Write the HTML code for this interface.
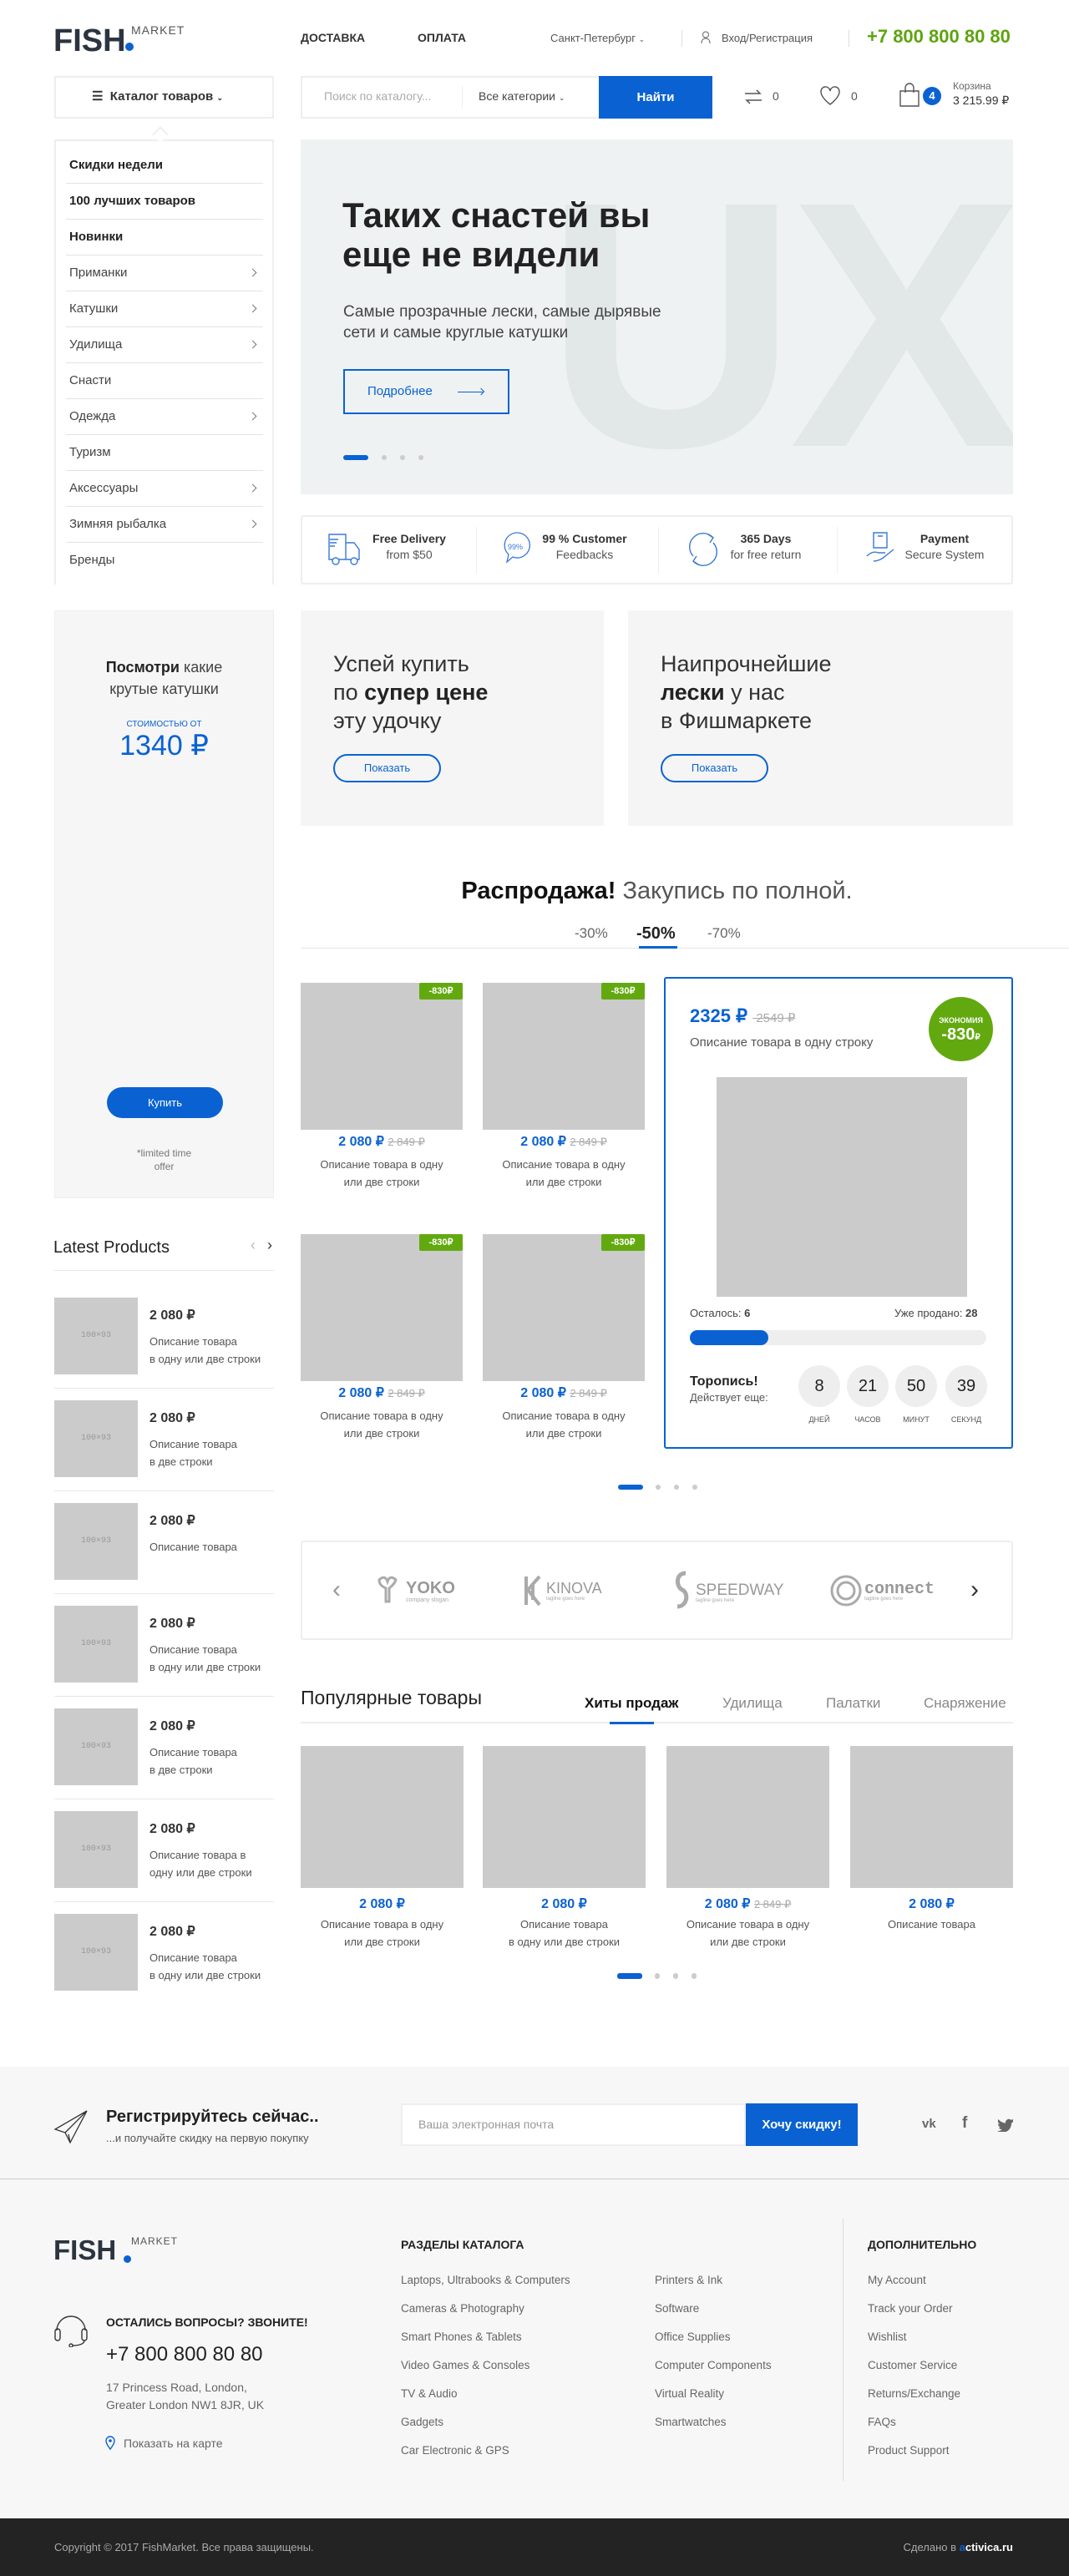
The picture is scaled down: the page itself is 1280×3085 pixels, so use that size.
<!DOCTYPE html>
<html><head><meta charset="utf-8">
<style>
*{margin:0;padding:0;box-sizing:border-box}
body{width:1280px;height:3085px;position:relative;background:#fff;font-family:"Liberation Sans","Noto Sans CJK SC",sans-serif;color:#333;overflow:hidden}
.a{position:absolute;white-space:nowrap;line-height:1.2}
.blue{color:#0a62d2}
.gray{background:#cbcbcb}
.c{text-align:center}
</style></head><body>

<!-- HEADER -->
<div class="a" style="left:64px;top:27px;font-size:38px;font-weight:bold;color:#2c3440;letter-spacing:0">FISH</div>
<div class="a" style="left:150px;top:51px;width:10px;height:10px;border-radius:50%;background:#0a62d2"></div>
<div class="a" style="left:157px;top:28px;font-size:14px;color:#555;letter-spacing:1px">MARKET</div>
<div class="a" style="left:360px;top:37px;font-size:14px;font-weight:bold;color:#333">ДОСТАВКА</div>
<div class="a" style="left:500px;top:37px;font-size:14px;font-weight:bold;color:#333">ОПЛАТА</div>
<div class="a" style="left:659px;top:38px;font-size:13px;color:#555">Санкт-Петербург <span style="font-size:9px">⌄</span></div>
<div class="a" style="left:816px;top:36px;width:1px;height:20px;background:#ddd"></div>
<svg class="a" style="left:839px;top:37px" width="12" height="16" viewBox="0 0 12 16"><circle cx="6" cy="4.5" r="3.5" fill="none" stroke="#666"/><path d="M1 15c0-4 2-6 5-6s5 2 5 6" fill="none" stroke="#666"/></svg>
<div class="a" style="left:864px;top:38px;font-size:13px;color:#555">Вход/Регистрация</div>
<div class="a" style="left:1016px;top:36px;width:1px;height:20px;background:#ddd"></div>
<div class="a" style="left:1038px;top:31px;font-size:22px;font-weight:bold;color:#5ea310">+7 800 800 80 80</div>

<div class="a" style="left:65px;top:91px;width:263px;height:51px;border:2px solid #eee;background:#fff"></div>
<div class="a" style="left:110px;top:107px;font-size:15px;font-weight:bold;color:#333">☰&nbsp; Каталог товаров <span style="font-size:9px">⌄</span></div>
<div class="a" style="left:360px;top:91px;width:493px;height:51px;border:2px solid #eee"></div>
<div class="a" style="left:388px;top:107px;font-size:14px;color:#aaa">Поиск по каталогу...</div>
<div class="a" style="left:553px;top:102px;width:1px;height:28px;background:#eee"></div>
<div class="a" style="left:573px;top:107px;font-size:14px;color:#444">Все категории <span style="font-size:9px">⌄</span></div>
<div class="a c" style="left:717px;top:91px;width:136px;height:51px;background:#0a62d2;color:#fff;font-size:15px;font-weight:bold;line-height:51px">Найти</div>
<svg class="a" style="left:889px;top:104px" width="26" height="24" viewBox="0 0 26 24"><path d="M3 8h18l-4-4M23 16H5l4 4" fill="none" stroke="#555" stroke-width="1.5"/></svg>
<div class="a" style="left:925px;top:107px;font-size:14px;color:#555">0</div>
<svg class="a" style="left:981px;top:102px" width="26" height="26" viewBox="0 0 26 26"><path d="M13 23S2 15 2 8a5.5 5.5 0 0 1 11-1 5.5 5.5 0 0 1 11 1c0 7-11 15-11 15z" fill="none" stroke="#555" stroke-width="1.4"/></svg>
<div class="a" style="left:1019px;top:107px;font-size:14px;color:#555">0</div>
<svg class="a" style="left:1076px;top:99px" width="26" height="30" viewBox="0 0 26 30"><path d="M2 10h22v18H2z M8 12V6a5 5 0 0 1 10 0v6" fill="none" stroke="#555" stroke-width="1.4"/></svg>
<div class="a c" style="left:1105px;top:104px;width:22px;height:22px;border-radius:50%;background:#0a62d2;color:#fff;font-size:13px;font-weight:bold;line-height:22px">4</div>
<div class="a" style="left:1141px;top:96px;font-size:12px;color:#666">Корзина</div>
<div class="a" style="left:1141px;top:112px;font-size:14px;color:#333">3 215.99 ₽</div>

<!-- SIDEBAR MENU -->
<div class="a" style="left:65px;top:167px;width:263px;height:533px;border:2px solid #eee;border-bottom:none"></div>
<div class="a" style="left:185px;top:154px;width:14px;height:14px;background:#fff;border-left:2px solid #eee;border-top:2px solid #eee;transform:rotate(45deg)"></div>
<div id="menu"></div>

<!-- HERO -->
<div class="a" style="left:360px;top:167px;width:853px;height:425px;background:#eef2f2;overflow:hidden">
 <div class="a" style="left:292px;top:13px;font-size:420px;font-weight:bold;color:#e2e7e7;letter-spacing:-10px;line-height:1">UX</div>
</div>
<div class="a" style="left:410px;top:234px;font-size:42px;font-weight:bold;color:#222;line-height:47px">Таких снастей вы<br>еще не видели</div>
<div class="a" style="left:411px;top:361px;font-size:19px;color:#444;line-height:25px">Самые прозрачные лески, самые дырявые<br>сети и самые круглые катушки</div>
<div class="a" style="left:411px;top:442px;width:199px;height:54px;border:2px solid #0a62d2"></div>
<div class="a blue" style="left:440px;top:460px;font-size:15px">Подробнее</div>
<div class="a" style="left:548px;top:469px;width:30px;height:1px;background:#0a62d2"></div>
<div class="a" style="left:573px;top:466px;width:6px;height:6px;border-top:1px solid #0a62d2;border-right:1px solid #0a62d2;transform:rotate(45deg)"></div>
<div class="a" style="left:411px;top:545px;width:30px;height:6px;border-radius:3px;background:#0a62d2"></div>
<div class="a" style="left:457px;top:545px;width:6px;height:6px;border-radius:3px;background:#ccc"></div>
<div class="a" style="left:479px;top:545px;width:6px;height:6px;border-radius:3px;background:#ccc"></div>
<div class="a" style="left:501px;top:545px;width:6px;height:6px;border-radius:3px;background:#ccc"></div>

<!-- FEATURES -->
<div class="a" style="left:360px;top:617px;width:853px;height:83px;border:2px solid #eee;border-radius:3px"></div>
<svg class="a" style="left:392px;top:638px" width="42" height="42" viewBox="0 0 42 42" fill="none" stroke="#3a78d6" stroke-width="1.4"><path d="M2 2h20v30H2zM22 12h10l6 8v12H22"/><circle cx="10" cy="34" r="4" fill="#fff"/><circle cx="32" cy="34" r="4" fill="#fff"/><path d="M3 8h10M3 12h8M3 16h6"/></svg>
<div class="a c" style="left:440px;top:637px;width:100px;font-size:14px;font-weight:bold;color:#333">Free Delivery</div>
<div class="a c" style="left:440px;top:656px;width:100px;font-size:14px;color:#555">from $50</div>
<div class="a" style="left:570px;top:631px;width:1px;height:56px;background:#eee"></div>
<svg class="a" style="left:603px;top:636px" width="34" height="42" viewBox="0 0 34 42" fill="none" stroke="#3a78d6" stroke-width="1.3"><path d="M17 2a15 15 0 1 1-6 29l-7 6 2-9A15 15 0 0 1 17 2z"/><text x="5" y="22" font-size="9" fill="#3a78d6" stroke="none" font-family="Liberation Sans">99%</text></svg>
<div class="a c" style="left:640px;top:637px;width:120px;font-size:14px;font-weight:bold;color:#333">99 % Customer</div>
<div class="a c" style="left:640px;top:656px;width:120px;font-size:14px;color:#555">Feedbacks</div>
<div class="a" style="left:788px;top:631px;width:1px;height:56px;background:#eee"></div>
<svg class="a" style="left:824px;top:636px" width="36" height="44" viewBox="0 0 36 44" fill="none" stroke="#3a78d6" stroke-width="1.4"><path d="M6 30A15 15 0 0 1 30 8M30 14A15 15 0 0 1 6 36"/><path d="M24 4l6 4-4 6M12 40l-6-4 4-6"/></svg>
<div class="a c" style="left:867px;top:637px;width:100px;font-size:14px;font-weight:bold;color:#333">365 Days</div>
<div class="a c" style="left:867px;top:656px;width:100px;font-size:14px;color:#555">for free return</div>
<div class="a" style="left:1002px;top:631px;width:1px;height:56px;background:#eee"></div>
<svg class="a" style="left:1036px;top:636px" width="40" height="40" viewBox="0 0 40 40" fill="none" stroke="#3a78d6" stroke-width="1.4"><path d="M10 2h16v18H10zM15 6h6"/><path d="M2 30c4-4 8-6 14-4h8M10 36c4 0 10-2 14-6l10-8"/></svg>
<div class="a c" style="left:1076px;top:637px;width:110px;font-size:14px;font-weight:bold;color:#333">Payment</div>
<div class="a c" style="left:1076px;top:656px;width:110px;font-size:14px;color:#555">Secure System</div>

<!-- LEFT PROMO -->
<div class="a" style="left:65px;top:731px;width:263px;height:704px;background:#f6f6f6;border:1px solid #eee"></div>
<div class="a c" style="left:65px;top:786px;width:263px;font-size:18px;color:#444;line-height:26px"><b style="color:#222">Посмотри</b> какие<br>крутые катушки</div>
<div class="a c blue" style="left:65px;top:862px;width:263px;font-size:10px">СТОИМОСТЬЮ ОТ</div>
<div class="a c blue" style="left:65px;top:873px;width:263px;font-size:34px">1340 ₽</div>
<div class="a c" style="left:128px;top:1302px;width:139px;height:37px;border-radius:19px;background:#0a62d2;color:#fff;font-size:13px;line-height:37px">Купить</div>
<div class="a c" style="left:65px;top:1373px;width:263px;font-size:12px;color:#777;line-height:16px">*limited time<br>offer</div>

<!-- PROMO CARDS -->
<div class="a" style="left:360px;top:731px;width:363px;height:258px;background:#f5f5f5"></div>
<div class="a" style="left:399px;top:778px;font-size:27px;color:#333;line-height:34px">Успей купить<br>по <b style="color:#222">супер цене</b><br>эту удочку</div>
<div class="a c blue" style="left:399px;top:903px;width:129px;height:34px;border:2px solid #0a62d2;border-radius:17px;font-size:13px;line-height:30px">Показать</div>
<div class="a" style="left:752px;top:731px;width:461px;height:258px;background:#f5f5f5"></div>
<div class="a" style="left:791px;top:778px;font-size:27px;color:#333;line-height:34px">Наипрочнейшие<br><b style="color:#222">лески</b> у нас<br>в Фишмаркете</div>
<div class="a c blue" style="left:791px;top:903px;width:129px;height:34px;border:2px solid #0a62d2;border-radius:17px;font-size:13px;line-height:30px">Показать</div>

<!-- SALE -->
<div class="a c" style="left:360px;top:1050px;width:853px;font-size:29px;color:#555"><b style="color:#111">Распродажа!</b> Закупись по полной.</div>
<div class="a" style="left:688px;top:1108px;font-size:17px;color:#666">-30%</div>
<div class="a" style="left:762px;top:1106px;font-size:20px;font-weight:bold;color:#222">-50%</div>
<div class="a" style="left:847px;top:1108px;font-size:17px;color:#666">-70%</div>
<div class="a" style="left:360px;top:1135px;width:920px;height:1px;background:#e5e5e5"></div>
<div class="a" style="left:765px;top:1133px;width:46px;height:3px;background:#0a62d2"></div>
<div id="sale"></div>

<!-- BIG CARD -->
<div class="a" style="left:795px;top:1170px;width:418px;height:565px;border:2px solid #0a62d2;border-radius:3px"></div>
<div class="a blue" style="left:826px;top:1204px;font-size:22px;font-weight:bold">2325 ₽ <span style="font-size:15px;color:#aaa;font-weight:normal;text-decoration:line-through">&nbsp;2549 ₽</span></div>
<div class="a" style="left:826px;top:1240px;font-size:15px;color:#555">Описание товара в одну строку</div>
<div class="a c" style="left:1112px;top:1194px;width:77px;height:77px;border-radius:50%;background:#62a90f;color:#fff"><div style="margin-top:23px;font-size:9px;font-weight:bold">ЭКОНОМИЯ</div><div style="font-size:20px;font-weight:bold;line-height:22px">-830<span style="font-size:10px">₽</span></div></div>
<div class="a gray" style="left:858px;top:1290px;width:300px;height:263px"></div>
<div class="a" style="left:826px;top:1565px;font-size:13px;color:#444">Осталось: <b>6</b></div>
<div class="a" style="left:1071px;top:1565px;font-size:13px;color:#444">Уже продано: <b>28</b></div>
<div class="a" style="left:826px;top:1593px;width:355px;height:18px;border-radius:9px;background:#eee"></div>
<div class="a" style="left:826px;top:1593px;width:94px;height:18px;border-radius:9px;background:#0a62d2"></div>
<div class="a" style="left:826px;top:1645px;font-size:16px;font-weight:bold;color:#222">Торопись!</div>
<div class="a" style="left:826px;top:1666px;font-size:13px;color:#555">Действует еще:</div>
<div id="timer"></div>
<div class="a" style="left:740px;top:1778px;width:30px;height:6px;border-radius:3px;background:#0a62d2"></div>
<div class="a" style="left:785px;top:1778px;width:6px;height:6px;border-radius:3px;background:#ccc"></div>
<div class="a" style="left:807px;top:1778px;width:6px;height:6px;border-radius:3px;background:#ccc"></div>
<div class="a" style="left:829px;top:1778px;width:6px;height:6px;border-radius:3px;background:#ccc"></div>

<!-- LATEST PRODUCTS -->
<div class="a" style="left:64px;top:1482px;font-size:20px;color:#222">Latest Products</div>
<div class="a" style="left:300px;top:1481px;font-size:18px;color:#bbb">‹</div>
<div class="a" style="left:320px;top:1481px;font-size:18px;color:#333">›</div>
<div class="a" style="left:65px;top:1521px;width:263px;height:1px;background:#e5e5e5"></div>
<div id="latest"></div>

<!-- BRANDS -->
<div class="a" style="left:360px;top:1845px;width:853px;height:119px;border:2px solid #eee;border-radius:3px"></div>
<div class="a" style="left:398px;top:1886px;font-size:30px;color:#999">‹</div>
<div class="a" style="left:1162px;top:1886px;font-size:30px;color:#333">›</div>
<svg class="a" style="left:448px;top:1884px" width="104" height="42" viewBox="0 0 104 42"><path d="M6 8c4-4 8-4 10 2 2-6 6-6 10-2-2 6-6 8-8 10v16h-4V18C10 16 6 14 6 8z" fill="none" stroke="#aaa" stroke-width="3"/><text x="38" y="24" font-size="20" font-weight="bold" fill="#999" font-family="Liberation Sans">YOKO</text><text x="38" y="34" font-size="7" fill="#aaa" font-family="Liberation Sans">company slogan</text></svg>
<svg class="a" style="left:628px;top:1884px" width="116" height="42" viewBox="0 0 116 42"><path d="M2 4v34M4 20L18 4M4 20l14 18M10 12v20" fill="none" stroke="#aaa" stroke-width="4"/><text x="26" y="24" font-size="18" fill="#999" font-family="Liberation Sans">KINOVA</text><text x="26" y="32" font-size="6" fill="#aaa" font-family="Liberation Sans">tagline goes here</text></svg>
<svg class="a" style="left:803px;top:1880px" width="138" height="50" viewBox="0 0 138 50"><path d="M18 4C6 4 6 20 14 24s6 20-6 20" fill="none" stroke="#aaa" stroke-width="5"/><text x="30" y="30" font-size="19" fill="#999" font-family="Liberation Sans">SPEEDWAY</text><text x="30" y="38" font-size="6" fill="#aaa" font-family="Liberation Sans">tagline goes here</text></svg>
<svg class="a" style="left:993px;top:1882px" width="132" height="46" viewBox="0 0 132 46"><circle cx="20" cy="23" r="17" fill="none" stroke="#aaa" stroke-width="3"/><circle cx="20" cy="23" r="10" fill="none" stroke="#aaa" stroke-width="3"/><text x="42" y="26" font-size="20" font-weight="bold" fill="#999" font-family="Liberation Mono">connect</text><text x="42" y="34" font-size="6" fill="#aaa" font-family="Liberation Sans">tagline goes here</text></svg>

<!-- POPULAR -->
<div class="a" style="left:360px;top:2020px;font-size:23px;color:#222">Популярные товары</div>
<div class="a" style="left:700px;top:2030px;font-size:17px;font-weight:bold;color:#111">Хиты продаж</div>
<div class="a" style="left:865px;top:2030px;font-size:17px;color:#888">Удилища</div>
<div class="a" style="left:989px;top:2030px;font-size:17px;color:#888">Палатки</div>
<div class="a" style="left:1106px;top:2030px;font-size:17px;color:#888">Снаряжение</div>
<div class="a" style="left:360px;top:2062px;width:853px;height:2px;background:#eee"></div>
<div class="a" style="left:730px;top:2062px;width:53px;height:3px;background:#0a62d2"></div>
<div id="pop"></div>
<div class="a" style="left:739px;top:2363px;width:30px;height:7px;border-radius:3px;background:#0a62d2"></div>
<div class="a" style="left:784px;top:2363px;width:6px;height:7px;border-radius:3px;background:#ccc"></div>
<div class="a" style="left:806px;top:2363px;width:6px;height:7px;border-radius:3px;background:#ccc"></div>
<div class="a" style="left:828px;top:2363px;width:6px;height:7px;border-radius:3px;background:#ccc"></div>

<!-- NEWSLETTER -->
<div class="a" style="left:0;top:2475px;width:1280px;height:541px;background:#f7f7f7"></div>
<div class="a" style="left:0;top:2609px;width:1280px;height:1px;background:#ccc"></div>
<svg class="a" style="left:64px;top:2526px" width="42" height="42" viewBox="0 0 42 42" fill="none" stroke="#333" stroke-width="1.3"><path d="M40 2L2 24l12 4 6 12L40 2 14 28M20 40l-2-10"/></svg>
<div class="a" style="left:127px;top:2523px;font-size:20px;font-weight:bold;color:#222">Регистрируйтесь сейчас..</div>
<div class="a" style="left:127px;top:2553px;font-size:13px;color:#555">...и получайте скидку на первую покупку</div>
<div class="a" style="left:480px;top:2519px;width:413px;height:51px;background:#fff;border:2px solid #eee"></div>
<div class="a" style="left:501px;top:2536px;font-size:14px;color:#999">Ваша электронная почта</div>
<div class="a c" style="left:893px;top:2519px;width:134px;height:51px;background:#0a62d2;color:#fff;font-size:15px;font-weight:bold;line-height:51px">Хочу скидку!</div>
<div class="a" style="left:1104px;top:2535px;font-size:15px;font-weight:bold;color:#666">vk</div>
<div class="a" style="left:1152px;top:2532px;font-size:19px;font-weight:bold;color:#666">f</div>
<svg class="a" style="left:1194px;top:2536px" width="20" height="17" viewBox="0 0 20 17"><path d="M19 2c-1 .5-2 .7-2.5.8A4 4 0 0 0 10 6.5C6.5 6.5 3.5 4.5 1.5 2c-1.5 2.5 0 5 1.5 6-1 0-1.5-.3-2-.5 0 2 1.5 3.5 3 4-1 .3-1.5.3-2 .2.5 1.5 2 2.5 4 2.5-2 1.5-4 2-6 1.8 8 4.5 17 0 17-9l2-2z" fill="#666"/></svg>

<!-- FOOTER -->
<div class="a" style="left:64px;top:2675px;font-size:33px;font-weight:bold;color:#2c3440">FISH</div>
<div class="a" style="left:148px;top:2701px;width:9px;height:9px;border-radius:50%;background:#0a62d2"></div>
<div class="a" style="left:157px;top:2677px;font-size:12px;color:#555;letter-spacing:1px">MARKET</div>
<svg class="a" style="left:64px;top:2769px" width="42" height="42" viewBox="0 0 42 42" fill="none" stroke="#333" stroke-width="1.4"><path d="M4 22a17 17 0 0 1 34 0"/><rect x="2" y="20" width="6" height="14" rx="3"/><rect x="34" y="20" width="6" height="14" rx="3"/><path d="M37 34c0 4-6 6-14 6"/><circle cx="21" cy="40" r="2"/></svg>
<div class="a" style="left:127px;top:2773px;font-size:14px;font-weight:bold;color:#222">ОСТАЛИСЬ ВОПРОСЫ? ЗВОНИТЕ!</div>
<div class="a" style="left:127px;top:2806px;font-size:24px;color:#222">+7 800 800 80 80</div>
<div class="a" style="left:127px;top:2849px;font-size:14px;color:#666;line-height:21px">17 Princess Road, London,<br>Greater London NW1 8JR, UK</div>
<svg class="a" style="left:126px;top:2917px" width="12" height="17" viewBox="0 0 12 17"><path d="M6 16S1 10 1 6a5 5 0 0 1 10 0c0 4-5 10-5 10z" fill="none" stroke="#0a62d2" stroke-width="1.4"/><circle cx="6" cy="6" r="1.8" fill="#0a62d2"/></svg>
<div class="a" style="left:148px;top:2918px;font-size:14px;color:#666">Показать на карте</div>
<div class="a" style="left:480px;top:2680px;font-size:14px;font-weight:bold;color:#222">РАЗДЕЛЫ КАТАЛОГА</div>
<div class="a" style="left:1039px;top:2680px;font-size:14px;font-weight:bold;color:#222">ДОПОЛНИТЕЛЬНО</div>
<div class="a" style="left:1009px;top:2657px;width:1px;height:314px;background:#ddd"></div>
<div id="flinks"></div>

<div class="a" style="left:0;top:3016px;width:1280px;height:69px;background:#232323"></div>
<div class="a" style="left:65px;top:3043px;font-size:13px;color:#aaa">Copyright © 2017 FishMarket. Все права защищены.</div>
<div class="a" style="left:1070px;top:3043px;width:143px;text-align:right;font-size:13px;color:#aaa">Сделано в <b style="color:#fff"><span style="color:#0a62d2">a</span>ctivica.ru</b></div>

<script>
function h(id,s){document.getElementById(id).outerHTML=s}
var m=[["Скидки недели",1,0],["100 лучших товаров",1,0],["Новинки",1,0],["Приманки",0,1],["Катушки",0,1],["Удилища",0,1],["Снасти",0,0],["Одежда",0,1],["Туризм",0,0],["Аксессуары",0,1],["Зимняя рыбалка",0,1],["Бренды",0,0]],s="";
m.forEach(function(it,i){var c=198+i*43;
s+='<div class="a" style="left:83px;top:'+(c-9)+'px;font-size:15px;color:'+(it[1]?'#222':'#444')+';'+(it[1]?'font-weight:bold;':'')+'">'+it[0]+'</div>';
if(it[2])s+='<div class="a" style="left:299px;top:'+(c-4)+'px;width:7px;height:7px;border-top:1px solid #777;border-right:1px solid #777;transform:rotate(45deg)"></div>';
if(i<11)s+='<div class="a" style="left:79px;top:'+(c+21)+'px;width:236px;height:1px;background:#e3e3e3"></div>';});
h("menu",s);
s="";[[360,1177],[578,1177],[360,1478],[578,1478]].forEach(function(p){
s+='<div class="a gray" style="left:'+p[0]+'px;top:'+p[1]+'px;width:194px;height:176px"></div>';
s+='<div class="a c" style="left:'+(p[0]+142)+'px;top:'+(p[1]+0)+'px;width:52px;height:20px;background:#62a90f;color:#fff;font-size:11px;font-weight:bold;line-height:20px;border-radius:2px">-830₽</div>';
s+='<div class="a c" style="left:'+p[0]+'px;top:'+(p[1]+181)+'px;width:194px;font-size:16px;font-weight:bold;color:#0a62d2">2 080 ₽ <span style="font-size:13px;color:#aaa;font-weight:normal;text-decoration:line-through">2 849 ₽</span></div>';
s+='<div class="a c" style="left:'+p[0]+'px;top:'+(p[1]+207)+'px;width:194px;font-size:13px;color:#555;line-height:21px">Описание товара в одну<br>или две строки</div>';});
h("sale",s);
s="";[[981,"8","ДНЕЙ"],[1039,"21","ЧАСОВ"],[1097,"50","МИНУТ"],[1157,"39","СЕКУНД"]].forEach(function(t){
s+='<div class="a c" style="left:'+(t[0]-25)+'px;top:'+1635+'px;width:50px;height:50px;border-radius:50%;background:#eee;font-size:20px;color:#222;line-height:50px">'+t[1]+'</div>';
s+='<div class="a c" style="left:'+(t[0]-30)+'px;top:1695px;width:60px;font-size:9px;color:#555">'+t[2]+'</div>';});
h("timer",s);
var L=[["Описание товара","в одну или две строки"],["Описание товара","в две строки"],["Описание товара",""],["Описание товара","в одну или две строки"],["Описание товара","в две строки"],["Описание товара в","одну или две строки"],["Описание товара","в одну или две строки"]];s="";
L.forEach(function(d,i){var t=1554+i*123;
s+='<div class="a gray" style="left:65px;top:'+t+'px;width:100px;height:92px"></div>';
s+='<div class="a c" style="left:65px;top:'+(t+40)+'px;width:100px;font-size:10px;color:#999;font-family:Liberation Mono">100×93</div>';
s+='<div class="a" style="left:179px;top:'+(t+12)+'px;font-size:16px;font-weight:bold;color:#333">2 080 ₽</div>';
s+='<div class="a" style="left:179px;top:'+(t+42)+'px;font-size:13px;color:#555;line-height:21px">'+d[0]+'<br>'+d[1]+'</div>';
if(i<6)s+='<div class="a" style="left:65px;top:'+(t+108)+'px;width:263px;height:1px;background:#e8e8e8"></div>';});
h("latest",s);
var P=[[360,"Описание товара в одну<br>или две строки",0],[578,"Описание товара<br>в одну или две строки",0],[798,"Описание товара в одну<br>или две строки",1],[1018,"Описание товара",0]];s="";
P.forEach(function(p){
s+='<div class="a gray" style="left:'+p[0]+'px;top:2091px;width:195px;height:170px"></div>';
s+='<div class="a c" style="left:'+p[0]+'px;top:2271px;width:195px;font-size:16px;font-weight:bold;color:#0a62d2">2 080 ₽'+(p[2]?' <span style="font-size:13px;color:#aaa;font-weight:normal;text-decoration:line-through">2 849 ₽</span>':'')+'</div>';
s+='<div class="a c" style="left:'+p[0]+'px;top:2294px;width:195px;font-size:13px;color:#555;line-height:21px">'+p[1]+'</div>';});
h("pop",s);
var c1=["Laptops, Ultrabooks &amp; Computers","Cameras &amp; Photography","Smart Phones &amp; Tablets","Video Games &amp; Consoles","TV &amp; Audio","Gadgets","Car Electronic &amp; GPS"],
c2=["Printers &amp; Ink","Software","Office Supplies","Computer Components","Virtual Reality","Smartwatches"],
c3=["My Account","Track your Order","Wishlist","Customer Service","Returns/Exchange","FAQs","Product Support"];s="";
[[480,c1],[784,c2],[1039,c3]].forEach(function(col){col[1].forEach(function(t,i){
s+='<div class="a" style="left:'+col[0]+'px;top:'+(2723+i*34)+'px;font-size:13.5px;color:#666">'+t+'</div>';});});
h("flinks",s);
</script>
</body></html>
